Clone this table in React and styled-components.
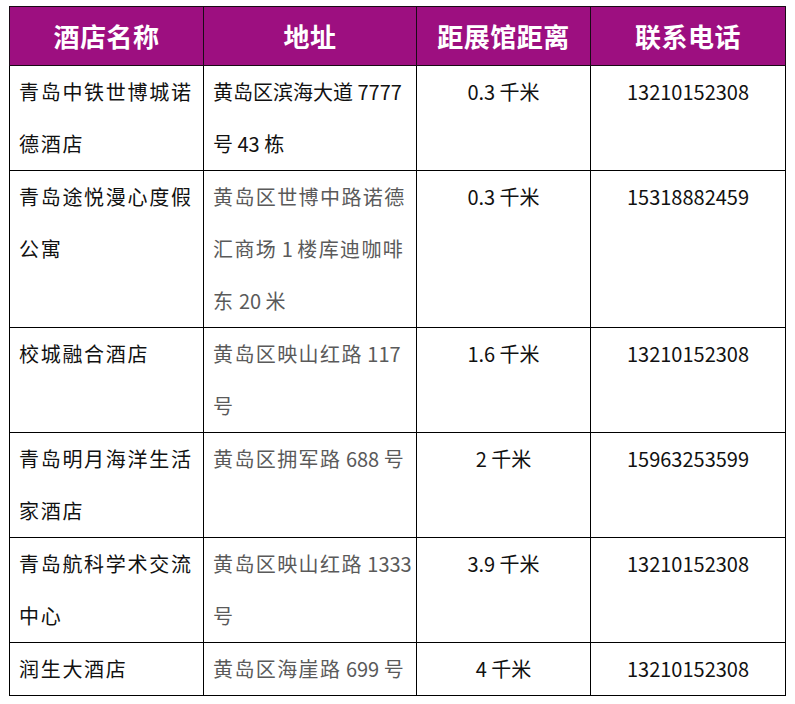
import styled, { createGlobalStyle } from "styled-components";

const GlobalStyle = createGlobalStyle`
    html, body {
        margin: 0;
        padding: 0;
        background: #ffffff;
    }
    body {
        font-family: "Noto Sans CJK SC", "Noto Sans", sans-serif;
    }
`;

const Page = styled.div`
    padding: 6px 0 0 9px;
    width: 795px;
    box-sizing: border-box;
`;

const HotelTable = styled.table`
    width: 776px;
    border-collapse: collapse;
    table-layout: fixed;
`;

const HeadCell = styled.th`
    background: #9d0f80;
    color: #ffffff;
    font-size: 26px;
    font-weight: 700;
    letter-spacing: 0.5px;
    line-height: 58px;
    height: 58px;
    padding: 0;
    text-align: center;
    border: 1px solid #1a0a16;
`;

const Cell = styled.td`
    border: 1px solid #000000;
    padding: 0 2px 0 9px;
    vertical-align: top;
    white-space: nowrap;
    font-size: 20px;
    line-height: 52px;
    color: ${props => props.muted ? '#5a5a5a' : '#111111'};
    letter-spacing: ${props => props.tight ? '0px' : props.muted ? '1.4px' : '1.7px'};
    text-align: ${props => props.center ? 'center' : 'left'};
    ${props => props.center && 'padding: 0; letter-spacing: 0;'}
`;

// digits keep their normal spacing, only the CJK glyphs are spread
const Num = styled.span`
    letter-spacing: 0;
`;

const hotels = [
    { name: ['青岛中铁世博城诺', '德酒店'], address: ['黄岛区滨海大道 7777', '号 43 栋'], plain: true, distance: '0.3 千米', phone: '13210152308' },
    { name: ['青岛途悦漫心度假', '公寓'], address: ['黄岛区世博中路诺德', '汇商场 1 楼库迪咖啡', '东 20 米'], distance: '0.3 千米', phone: '15318882459' },
    { name: ['校城融合酒店'], address: ['黄岛区映山红路 117', '号'], distance: '1.6 千米', phone: '13210152308' },
    { name: ['青岛明月海洋生活', '家酒店'], address: ['黄岛区拥军路 688 号'], distance: '2 千米', phone: '15963253599' },
    { name: ['青岛航科学术交流', '中心'], address: ['黄岛区映山红路 1333', '号'], distance: '3.9 千米', phone: '13210152308' },
    { name: ['润生大酒店'], address: ['黄岛区海崖路 699 号'], distance: '4 千米', phone: '13210152308' },
];

const Text = ({ children }) => children.split(/([0-9. ]+)/).map((part, i) =>
    /[0-9]/.test(part) ? <Num key={i}>{part}</Num> : part
);

const Lines = ({ lines }) => lines.map((line, i) => (
    <span key={i}>{i > 0 && <br />}<Text>{line}</Text></span>
));

const App = () => (
    <Page>
        <GlobalStyle />
        <HotelTable>
            <colgroup>
                <col style={{ width: 194 }} />
                <col style={{ width: 213 }} />
                <col style={{ width: 174 }} />
                <col style={{ width: 195 }} />
            </colgroup>
            <thead>
                <tr>
                    <HeadCell>酒店名称</HeadCell>
                    <HeadCell>地址</HeadCell>
                    <HeadCell>距展馆距离</HeadCell>
                    <HeadCell>联系电话</HeadCell>
                </tr>
            </thead>
            <tbody>
                {hotels.map(hotel => (
                    <tr key={hotel.name.join('')}>
                        <Cell><Lines lines={hotel.name} /></Cell>
                        <Cell muted={!hotel.plain} tight={hotel.plain}><Lines lines={hotel.address} /></Cell>
                        <Cell center>{hotel.distance}</Cell>
                        <Cell center>{hotel.phone}</Cell>
                    </tr>
                ))}
            </tbody>
        </HotelTable>
    </Page>
);

export default App;
